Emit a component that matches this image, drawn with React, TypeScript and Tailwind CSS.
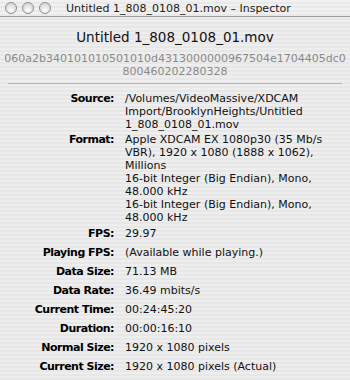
const font = { fontFamily: '"DejaVu Sans", "Liberation Sans", sans-serif' };

type Row = { label: string; lines: string[]; tall?: boolean; gap: string };

const rows: Row[] = [
  {
    label: "Source:",
    lines: ["/Volumes/VideoMassive/XDCAM", "Import/BrooklynHeights/Untitled", "1_808_0108_01.mov"],
    gap: "mt-0",
  },
  {
    label: "Format:",
    lines: [
      "Apple XDCAM EX 1080p30 (35 Mb/s",
      "VBR), 1920 x 1080 (1888 x 1062),",
      "Millions",
      "16-bit Integer (Big Endian), Mono,",
      "48.000 kHz",
      "16-bit Integer (Big Endian), Mono,",
      "48.000 kHz",
    ],
    gap: "mt-[2px]",
  },
  { label: "FPS:", lines: ["29.97"], tall: true, gap: "mt-[3px]" },
  { label: "Playing FPS:", lines: ["(Available while playing.)"], tall: true, gap: "mt-0" },
  { label: "Data Size:", lines: ["71.13 MB"], tall: true, gap: "mt-0" },
  { label: "Data Rate:", lines: ["36.49 mbits/s"], tall: true, gap: "mt-0" },
  { label: "Current Time:", lines: ["00:24:45:20"], tall: true, gap: "mt-0" },
  { label: "Duration:", lines: ["00:00:16:10"], tall: true, gap: "mt-0" },
  { label: "Normal Size:", lines: ["1920 x 1080 pixels"], tall: true, gap: "mt-0" },
  { label: "Current Size:", lines: ["1920 x 1080 pixels (Actual)"], tall: true, gap: "mt-0" },
];

function Light() {
  return (
    <div className="w-[12px] h-[12px] rounded-full border border-[#8e8e8e] bg-[radial-gradient(circle_at_50%_70%,#ffffff,#d8d8d8_70%)]" />
  );
}

export default function App() {
  return (
    <div
      className="w-[350px] h-[380px] overflow-hidden bg-[repeating-linear-gradient(to_bottom,#eeeeee_0px,#eeeeee_2px,#e7e7e7_2px,#e7e7e7_4px)] text-[#111]"
      style={font}
    >
      <div className="h-[17px] flex items-center border-b border-[#9c9c9c] bg-[repeating-linear-gradient(to_bottom,#f1f1f1_0px,#f1f1f1_2px,#e9e9e9_2px,#e9e9e9_4px)]">
        <div className="flex gap-[5px] pl-[5px]">
          <Light />
          <Light />
          <Light />
        </div>
        <div className="ml-[15px] text-[11px] leading-[13px] text-[#222] whitespace-nowrap">
          Untitled 1_808_0108_01.mov – Inspector
        </div>
      </div>

      <div className="mt-[11px] text-center text-[13.5px] leading-[19px] text-[#111]">
        Untitled 1_808_0108_01.mov
      </div>
      <div className="mt-[6px] text-center text-[11px] leading-[12.5px] text-[#8a8a8a] whitespace-nowrap">
        060a2b340101010501010d4313000000967504e1704405dc0
        <br />
        800460202280328
      </div>

      <div className="mt-[5px] mx-[8px] border-t border-[#b4b4b4]" />

      <div className="mt-[8px] grid grid-cols-[114px_1fr] gap-x-[11px]">
        {rows.map((r) => (
          <div key={r.label} className="contents">
            <div
              className={`${r.gap} ${r.tall ? "h-[19px]" : ""} text-right text-[11px] leading-[13px] font-bold tracking-[-0.5px] text-black whitespace-nowrap`}
            >
              {r.label}
            </div>
            <div className={`${r.gap} ${r.tall ? "h-[19px]" : ""} text-[11px] leading-[13px] whitespace-nowrap`}>
              {r.lines.map((l, i) => (
                <div key={i}>{l}</div>
              ))}
            </div>
          </div>
        ))}
      </div>
    </div>
  );
}
